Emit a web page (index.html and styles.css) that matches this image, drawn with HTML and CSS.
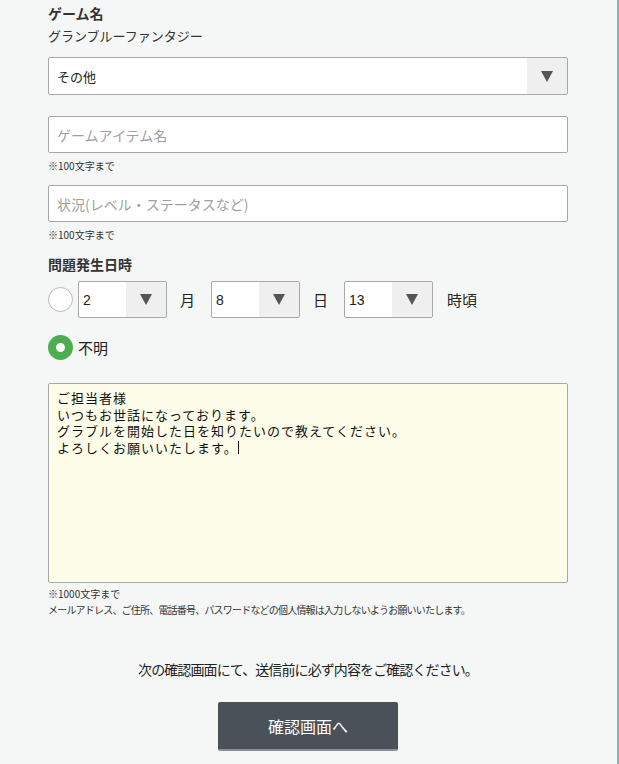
FILE: index.html
```html
<!DOCTYPE html>
<html lang="ja">
<head>
<meta charset="utf-8">
<link rel="stylesheet" href="styles.css">
</head>
<body>
<div class="page">
  <div class="form">
    <div class="label title">ゲーム名</div>
    <div class="value">グランブルーファンタジー</div>

    <div class="select wide">
      <select class="select-input"><option>その他</option></select>
      <span class="arrow"><span class="tri"></span></span>
    </div>

    <input class="text-input first" type="text" placeholder="ゲームアイテム名">
    <div class="note">※100文字まで</div>

    <input class="text-input second" type="text" placeholder="状況(レベル・ステータスなど)">
    <div class="note">※100文字まで</div>

    <div class="label heading">問題発生日時</div>
    <div class="date-row">
      <span class="radio"></span>
      <div class="select small">
        <select class="select-input"><option>2</option></select>
        <span class="arrow"><span class="tri"></span></span>
      </div>
      <span class="unit">月</span>
      <div class="select small">
        <select class="select-input"><option>8</option></select>
        <span class="arrow"><span class="tri"></span></span>
      </div>
      <span class="unit">日</span>
      <div class="select small">
        <select class="select-input"><option>13</option></select>
        <span class="arrow"><span class="tri"></span></span>
      </div>
      <span class="unit">時頃</span>
    </div>

    <div class="unknown-row">
      <span class="radio checked"></span>
      <span class="unknown-label">不明</span>
    </div>

    <div class="textarea">ご担当者様
いつもお世話になっております。
グラブルを開始した日を知りたいので教えてください。
よろしくお願いいたします。<span class="caret"></span></div>
    <div class="note note-a">※1000文字まで</div>
    <div class="note note-b">メールアドレス、ご住所、電話番号、パスワードなどの個人情報は入力しないようお願いいたします。</div>

    <div class="confirm-text">次の確認画面にて、送信前に必ず内容をご確認ください。</div>
    <div class="btn-wrap"><button class="btn">確認画面へ</button></div>
  </div>
</div>
</body>
</html>
```

FILE: styles.css
```css
html, body {
  margin: 0;
  padding: 0;
}
body {
  background: #f5f7f7;
  font-family: "Noto Sans CJK JP", "Liberation Sans", sans-serif;
  color: #222;
  width: 619px;
  height: 764px;
  overflow: hidden;
}
.page {
  width: 619px;
  height: 764px;
  border-right: 2px solid #86b3aa;
  box-sizing: border-box;
}
.form {
  width: 520px;
  margin-left: 48px;
  padding-top: 3px;
}
.label {
  font-weight: bold;
  font-size: 14px;
  line-height: 20px;
  color: #333;
}
.value {
  margin-top: 3px;
  font-size: 13px;
  line-height: 20px;
  color: #333;
}
.select {
  display: flex;
  box-sizing: border-box;
  border: 1px solid #a8a8a8;
  border-radius: 2px;
  background: #fff;
  overflow: hidden;
}
.select.wide {
  margin-top: 11px;
  height: 38px;
  width: 520px;
}
.select.small {
  width: 89px;
  height: 37px;
}
.select-input {
  flex: 1;
  min-width: 0;
  border: none;
  background: transparent;
  appearance: none;
  -webkit-appearance: none;
  font-family: "Noto Sans CJK JP", "Liberation Sans", sans-serif;
  font-size: 13px;
  color: #222;
  padding: 0 0 0 8px;
  outline: none;
}
.small .select-input {
  padding-left: 4px;
  font-family: "Liberation Sans", sans-serif;
  font-size: 14px;
}
.arrow {
  width: 40px;
  flex: none;
  background: #efefef;
  display: flex;
  align-items: center;
  justify-content: center;
}
.tri {
  width: 0;
  height: 0;
  border-left: 6px solid transparent;
  border-right: 6px solid transparent;
  border-top: 11px solid #555;
}
.text-input {
  display: block;
  box-sizing: border-box;
  width: 520px;
  height: 37px;
  border: 1px solid #a8a8a8;
  border-radius: 2px;
  background: #fff;
  padding: 0 8px;
  font-family: "Noto Sans CJK JP", "Liberation Sans", sans-serif;
  font-size: 14px;
  outline: none;
}
.text-input::placeholder {
  color: #a0a0a0;
}
.text-input.first {
  margin-top: 21px;
}
.text-input.second {
  margin-top: 12px;
}
.note {
  margin-top: 6px;
  font-size: 10px;
  line-height: 14px;
  color: #333;
}
.heading {
  margin-top: 12px;
}
.date-row {
  margin-top: 7px;
  display: flex;
  align-items: center;
  height: 37px;
}
.radio {
  box-sizing: border-box;
  width: 25px;
  height: 25px;
  border-radius: 50%;
  border: 1px solid #b8b8b8;
  background: #fff;
  flex: none;
  margin-right: 5px;
}
.radio.checked {
  border: 8px solid #4cae4f;
  background: #fff;
}
.unit {
  font-size: 15px;
  color: #222;
  margin: 0 16px 0 13px;
}
.unit:last-child {
  margin-right: 0;
  margin-left: 14px;
}
.unknown-row {
  margin-top: 16px;
  display: flex;
  align-items: center;
  height: 26px;
}
.unknown-label {
  font-size: 15px;
  color: #222;
}
.textarea {
  margin-top: 23px;
  box-sizing: border-box;
  width: 520px;
  height: 200px;
  border: 1px solid #a8a8a8;
  border-radius: 2px;
  background: #fdfde9;
  padding: 6px 8px;
  font-size: 13px;
  line-height: 16.5px;
  letter-spacing: 1px;
  white-space: pre-wrap;
  color: #111;
}
.caret {
  display: inline-block;
  width: 1px;
  height: 13px;
  background: #111;
  vertical-align: -1px;
}
.note-a {
  margin-top: 4px;
}
.note-b {
  margin-top: 2px;
  letter-spacing: -0.8px;
}
.confirm-text {
  margin-top: 42px;
  text-align: center;
  font-size: 14px;
  line-height: 20px;
  letter-spacing: -0.9px;
  color: #222;
}
.btn-wrap {
  margin-top: 23px;
  display: flex;
  justify-content: center;
}
.btn {
  width: 180px;
  height: 49px;
  border: none;
  border-radius: 2px;
  background: #4a5158;
  border-bottom: 2px solid #8a9096;
  color: #fff;
  font-family: "Noto Sans CJK JP", "Liberation Sans", sans-serif;
  font-size: 16px;
  cursor: pointer;
}
```
